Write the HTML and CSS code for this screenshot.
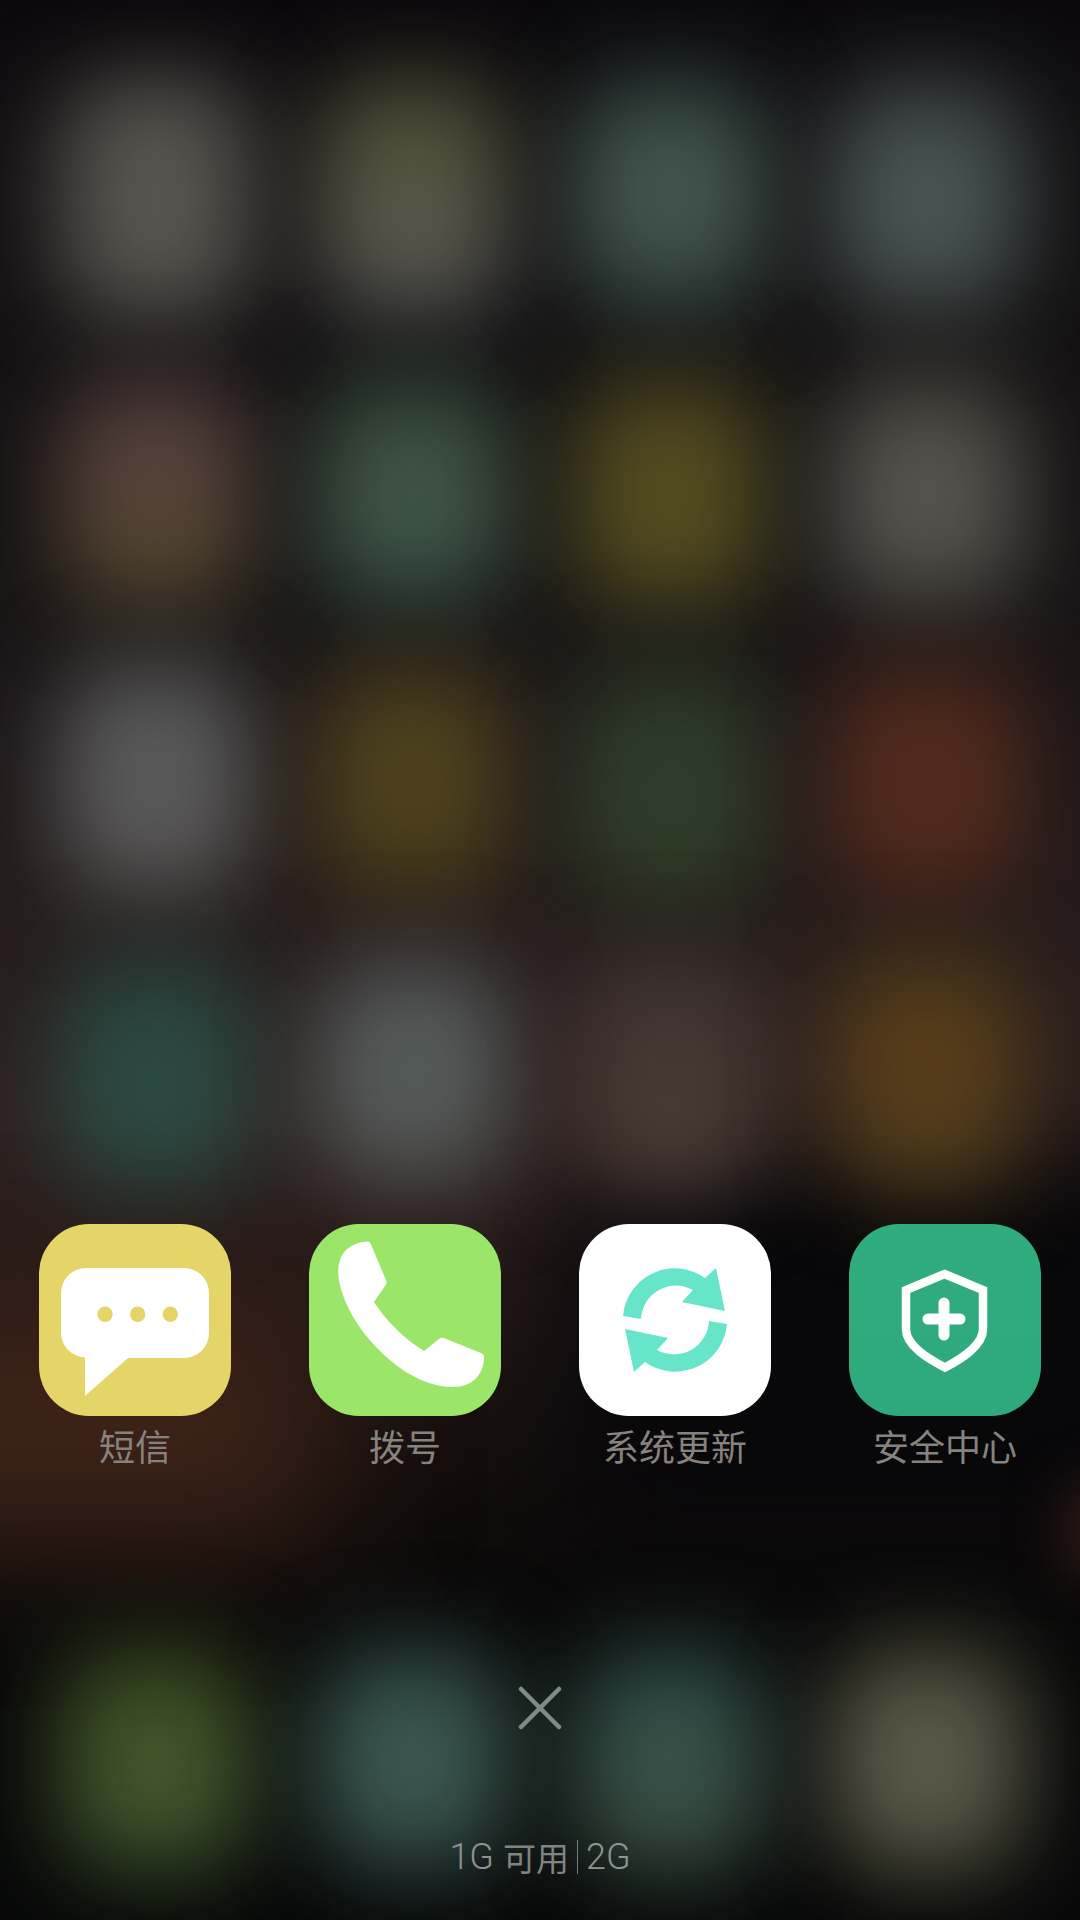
FILE: index.html
```html
<!DOCTYPE html>
<html lang="zh-CN">
<head>
<meta charset="utf-8">
<title>最近任务</title>
<link rel="stylesheet" href="styles.css">
</head>
<body>
<main class="screen">
  <div class="wallpaper" aria-hidden="true">
    <div class="glow glow-dark"></div>
    <div class="glow glow-warm"></div>
    <div class="glow glow-edge"></div>
    <div class="blobs">
      <i class="blob b11"></i><i class="blob b12"></i><i class="blob b13"></i><i class="blob b14"></i>
      <i class="blob b21"></i><i class="blob b22"></i><i class="blob b23"></i><i class="blob b24"></i>
      <i class="blob b31"></i><i class="blob b32"></i><i class="blob b33"></i><i class="blob b34"></i>
      <i class="blob b41"></i><i class="blob b42"></i><i class="blob b43"></i><i class="blob b44"></i>
      <i class="blob b51"></i><i class="blob b52"></i><i class="blob b53"></i><i class="blob b54"></i>
    </div>
  </div>
  <div class="content">
    <section class="apps">
      <div class="app">
        <div class="icon icon-sms">
          <svg viewBox="0 0 192 192" class="glyph">
            <path fill="#fff" d="M47 44H145A25 25 0 0 1 170 69V109A25 25 0 0 1 145 134H89L46 172V133.500A25 25 0 0 1 22 109V69A25 25 0 0 1 47 44Z"/>
            <circle cx="66" cy="90.300" r="7.700" fill="#e5d568"/>
            <circle cx="98.700" cy="90.300" r="7.700" fill="#e5d568"/>
            <circle cx="131.300" cy="90.300" r="7.700" fill="#e5d568"/>
          </svg>
        </div>
        <span class="label">短信</span>
      </div>
      <div class="app">
        <div class="icon icon-phone">
          <svg viewBox="0 0 192 192" class="glyph">
            <path fill="#fff" d="M58 17.500C60 17.300 61 18 61.500 19.500L77 56C78 58.500 77.500 60 76 62L65 78C77 97 97 116 115 127L130 115C132 113.500 133.500 113.500 136 114.500L172 129C174 130 175 131 175 133C175 150 164 163 144 163C122 163 100 152 82 137C62 120 46 100 37 79C30 62 27 48 31 36C35 24 46 18 58 17.500Z"/>
          </svg>
        </div>
        <span class="label">拨号</span>
      </div>
      <div class="app">
        <div class="icon icon-update">
          <svg viewBox="0 0 192 192" class="glyph">
            <g fill="#66e5c9">
              <path d="M44 92A52 52 0 0 1 126 54L137 44L146 87L103 78L114 66A35 35 0 0 0 62 95Z"/>
              <path transform="rotate(180 96 96)" d="M44 92A52 52 0 0 1 126 54L137 44L146 87L103 78L114 66A35 35 0 0 0 62 95Z"/>
            </g>
          </svg>
        </div>
        <span class="label">系统更新</span>
      </div>
      <div class="app">
        <div class="icon icon-shield">
          <svg viewBox="0 0 192 192" class="glyph">
            <path fill="none" stroke="#fff" stroke-width="8.500" d="M95.500 50L134 66V105C134 122 112 135 96 143.500C80 135 57 122 57 105V66Z"/>
            <path fill="none" stroke="#fff" stroke-width="11" stroke-linecap="round" d="M79 95H111M95 79V111"/>
          </svg>
        </div>
        <span class="label">安全中心</span>
      </div>
    </section>
    <button class="close" type="button" aria-label="关闭">
      <svg viewBox="0 0 44 44" class="close-glyph">
        <path fill="none" stroke="#7f8b89" stroke-width="4.500" stroke-linecap="round" d="M3 3L41 41M41 3L3 41"/>
      </svg>
    </button>
    <p class="memory"><span>1G</span><span class="cjk">可用</span><span class="sep"></span><span>2G</span></p>
  </div>
</main>
</body>
</html>
```

FILE: styles.css
```css
* { box-sizing: border-box; }
html, body { margin: 0; padding: 0; background: #0a090b; }

.screen {
  position: relative;
  width: 1080px;
  height: 1920px;
  overflow: hidden;
  font-family: Roboto, "Noto Sans CJK SC", sans-serif;
  background:
    linear-gradient(180deg, #0b090c 0, #121012 160px, #151213 500px, #1f1819 800px, #2e2120 1120px, #221716 1300px, #110c0b 1500px, #090909 1620px, #070808 1920px);
}

.wallpaper {
  position: absolute;
  inset: 0;
  overflow: hidden;
}

.glow { position: absolute; }
.glow-dark {
  left: 570px;
  top: 1150px;
  width: 660px;
  height: 400px;
  background: #08070a;
  filter: blur(60px);
}
.glow-warm {
  left: -140px;
  top: 1300px;
  width: 460px;
  height: 240px;
  background: #3e2318;
  filter: blur(70px);
}
.glow-edge {
  left: 1062px;
  top: 1480px;
  width: 60px;
  height: 100px;
  background: #281814;
  filter: blur(24px);
}

.blobs {
  position: absolute;
  left: 0;
  top: 0;
  width: 1080px;
  display: grid;
  grid-template-columns: repeat(4, 192px);
  grid-template-rows: 240px 240px 240px 240px 240px;
  column-gap: 65px;
  row-gap: 52px;
  padding: 78px 0 0 60px;
}
.blob { display: block; filter: blur(44px); border-radius: 60px; }
.blob:nth-child(n+17) { margin-top: 400px; height: 230px; }
.b21, .b22, .b23, .b24 { margin-top: 6px; }

.b11 { background: #58544f; }
.b12 { background: linear-gradient(180deg, #4c4a30, #585848 55%, #525254); }
.b13 { background: linear-gradient(180deg, #2f4640, #4a5a54 50%, #2a3e3a); }
.b14 { background: linear-gradient(180deg, #3c4242, #4c5a58 50%, #3e4444); }
.b21 { background: linear-gradient(180deg, #4a3a3c, #5a443a 45%, #4a4428); }
.b22 { background: linear-gradient(180deg, #2c4434, #465848 50%, #2c4840); }
.b23 { background: linear-gradient(180deg, #4a4120, #54501f 50%, #4c4420); }
.b24 { background: linear-gradient(180deg, #48463c, #585752 50%, #4a4840); }
.b31 { background: linear-gradient(180deg, #525252, #5e5e5e 50%, #504c4c); }
.b32 { background: linear-gradient(180deg, #453a1c, #52451f 50%, #423618); }
.b33 { background: linear-gradient(180deg, #283420, #324030 50%, #2e3c20); }
.b34 { background: linear-gradient(180deg, #48261a, #562d1e 50%, #48261a); }
.b41 { background: linear-gradient(180deg, #26403a, #2e4e46 60%, #28403a); }
.b42 { background: linear-gradient(180deg, #4c4a4c, #586260 50%, #4a4644); }
.b43 { background: linear-gradient(180deg, #3c3432, #483a34 60%, #483c36); }
.b44 { background: linear-gradient(180deg, #4c3a16, #5c3e1c 50%, #463a1a); }
.b51 { background: linear-gradient(180deg, #34441c, #465a2e 50%, #344828); }
.b52 { background: linear-gradient(180deg, #2c4642, #405e56 50%, #2c423f); }
.b53 { background: linear-gradient(180deg, #284640, #3a544c 50%, #36483a); }
.b54 { background: linear-gradient(180deg, #4c4c38, #605e4e 50%, #4a4a38); }

.content {
  position: relative;
  height: 100%;
  display: flex;
  flex-direction: column;
  align-items: center;
  padding-top: 1224px;
}

.apps {
  width: 100%;
  display: grid;
  grid-template-columns: repeat(4, 270px);
}

.app {
  display: flex;
  flex-direction: column;
  align-items: center;
  gap: 4px;
}

.icon {
  width: 192px;
  height: 192px;
  border-radius: 50px;
}
.icon-sms { background: #e5d568; }
.icon-phone { background: #9be668; }
.icon-update { background: #ffffff; }
.icon-shield { background: linear-gradient(180deg, #30ad7f, #2ea97d); }

.glyph { display: block; width: 192px; height: 192px; }

.label {
  font-family: "Noto Sans CJK SC", sans-serif;
  font-size: 36px;
  line-height: 50px;
  color: #86827e;
}

.close {
  margin-top: 216px;
  width: 44px;
  height: 44px;
  padding: 0;
  border: 0;
  background: none;
}
.close-glyph { display: block; width: 44px; height: 44px; }

.memory {
  margin: 107px 0 0;
  display: flex;
  align-items: center;
  font-size: 36px;
  font-weight: 300;
  line-height: 40px;
  color: #8f9392;
}
.cjk {
  margin-left: 9px;
  font-size: 33px;
  font-weight: 400;
  font-family: "Noto Sans CJK SC", sans-serif;
  color: #7f8382;
}
.sep {
  width: 1px;
  height: 34px;
  margin: 0 8px;
  background: #777b7a;
}
```
